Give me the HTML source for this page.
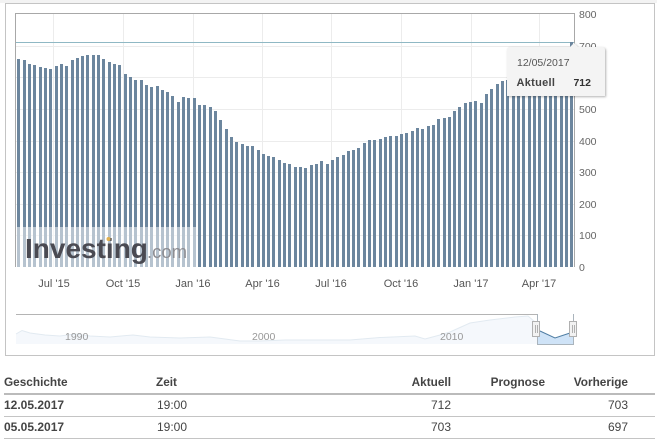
<!DOCTYPE html>
<html><head><meta charset="utf-8"><style>
html,body{margin:0;padding:0;background:#fff;width:657px;height:441px;overflow:hidden}
svg{display:block;font-family:"Liberation Sans",Arial,sans-serif}
</style></head><body>
<svg width="657" height="441" viewBox="0 0 657 441" xmlns="http://www.w3.org/2000/svg">
<rect width="657" height="3" fill="#f3f3f3"/>
<path d="M5.5 3.5H654.5V355.5H5.5Z" fill="#fff" stroke="#c4c4c4"/>
<g stroke="#ececec" fill="none" shape-rendering="crispEdges">
<path d="M53.5 14V267M123.5 14V267M193.5 14V267M262.5 14V267M331.5 14V267M401.5 14V267M471.5 14V267M539.5 14V267"/>
<path d="M16 46.5H574M16 77.5H574M16 109.5H574M16 141.5H574M16 172.5H574M16 204.5H574M16 235.5H574"/>
</g>
<path d="M15.5 267V13.5H574.5V267" fill="none" stroke="#a8a8a8" shape-rendering="crispEdges"/>
<path d="M16 42.5H574" stroke="#8fb8c4" shape-rendering="crispEdges"/>
<path shape-rendering="crispEdges" fill="none" stroke="#6c869e" stroke-width="3" d="M18.5 59V267M24.5 60V267M29.5 64V267M34.5 65V267M40.5 67V267M45.5 68V267M50.5 69V267M56.5 66V267M61.5 64V267M66.5 66V267M72.5 60V267M77.5 58V267M82.5 56V267M87.5 55V267M93.5 55V267M98.5 55V267M103.5 59V267M109.5 62V267M114.5 64V267M119.5 65V267M125.5 74V267M130.5 77V267M135.5 80V267M141.5 80V267M146.5 85V267M151.5 87V267M157.5 86V267M162.5 90V267M167.5 92V267M172.5 96V267M178.5 102V267M183.5 97V267M188.5 98V267M194.5 98V267M199.5 105V267M204.5 105V267M210.5 107V267M215.5 111V267M220.5 120V267M226.5 129V267M231.5 137V267M236.5 142V267M242.5 144V267M247.5 146V267M252.5 146V267M258.5 150V267M263.5 154V267M268.5 156V267M273.5 157V267M279.5 160V267M284.5 163V267M289.5 164V267M295.5 167V267M300.5 167V267M305.5 168V267M311.5 165V267M316.5 164V267M321.5 161V267M327.5 164V267M332.5 160V267M337.5 157V267M343.5 155V267M348.5 151V267M353.5 150V267M358.5 148V267M364.5 143V267M369.5 140V267M374.5 140V267M380.5 139V267M385.5 137V267M390.5 136V267M396.5 136V267M401.5 134V267M406.5 133V267M412.5 131V267M417.5 128V267M422.5 129V267M428.5 126V267M433.5 125V267M438.5 119V267M444.5 118V267M449.5 117V267M454.5 111V267M459.5 107V267M465.5 103V267M470.5 102V267M475.5 101V267M481.5 103V267M486.5 94V267M491.5 89V267M497.5 84V267M502.5 81V267M507.5 80V267M513.5 78V267M518.5 76V267M523.5 72V267M529.5 70V267M534.5 68V267M539.5 66V267M545.5 65V267M550.5 63V267M555.5 60V267M561.5 55V267M566.5 47V267M571.5 42V267"/>
<rect x="16" y="227" width="181" height="40" fill="#fff" fill-opacity=".5"/>
<text x="25" y="258" font-size="28" font-weight="700" fill="#4a4a52">Investing</text>
<text x="147" y="258" font-size="18.5" fill="#8d8d92">.com</text>
<circle cx="108.500" cy="239" r="2" fill="#e0b050"/>
<g font-size="10.5" fill="#666">
<text x="579" y="18">800</text><text x="579" y="50">700</text><text x="579" y="113">500</text><text x="579" y="145">400</text><text x="579" y="176">300</text><text x="579" y="208">200</text><text x="579" y="239">100</text><text x="579" y="271">0</text>
</g>
<g font-size="11" fill="#555" text-anchor="middle">
<text x="54" y="287">Jul '15</text><text x="123" y="287">Oct '15</text><text x="193" y="287">Jan '16</text><text x="262.500" y="287">Apr '16</text><text x="331" y="287">Jul '16</text><text x="401" y="287">Oct '16</text><text x="471" y="287">Jan '17</text><text x="539" y="287">Apr '17</text>
</g>
<path d="M16 314.500H537" stroke="#b4b4b4" shape-rendering="crispEdges"/>
<path d="M16 334L22 330.500L30 333L45 335L60 336L75 334L90 336L110 337L133 335L150 337L180 338L210 337L225 339L240 341L260 341L285 340L350 340L380 337.500L415 336L425 339L440 335L450 332L470 323L490 320L515 317L528 316L535 322L537 326V344H16Z" fill="#f5f8fc"/>
<path d="M16 334L22 330.500L30 333L45 335L60 336L75 334L90 336L110 337L133 335L150 337L180 338L210 337L225 339L240 341L260 341L285 340L350 340L380 337.500L415 336L425 339L440 335L450 332L470 323L490 320L515 317L528 316L535 322L537 326" fill="none" stroke="#e2eaf1"/>
<g font-size="10.5" fill="#999">
<text x="65" y="340">1990</text><text x="252" y="340">2000</text><text x="440" y="340">2010</text>
</g>
<path d="M537 327L540 331L555 338L570 333L573 332V344H537Z" fill="#cfe3f7"/>
<path d="M540 331L555 338L570 333" fill="none" stroke="#4f7da3"/>
<path d="M537.500 314V344.500H573.500V314" fill="none" stroke="#aab4bc" shape-rendering="crispEdges"/>
<g shape-rendering="crispEdges">
<rect x="532.500" y="321.500" width="7" height="15" fill="#f2f2f2" stroke="#b0b0b0"/>
<path d="M535.500 325V333M537.500 325V333" stroke="#b0b0b0"/>
<rect x="569.500" y="321.500" width="7" height="15" fill="#f2f2f2" stroke="#b0b0b0"/>
<path d="M572.500 325V333M574.500 325V333" stroke="#b0b0b0"/>
</g>
<path d="M507 96V50Q507 47 510 47H570L574 43L578 47H602Q605 47 605 50V96Z" fill="#f4f4f4" style="filter:drop-shadow(1px 1px 1px rgba(0,0,0,.3))"/>
<text x="517" y="66" font-size="10.5" fill="#555">12/05/2017</text>
<text x="516.500" y="86" font-size="11" font-weight="700" fill="#444" letter-spacing=".3">Aktuell</text>
<text x="591" y="86" font-size="10.5" font-weight="700" fill="#333" text-anchor="end">712</text>
<g font-size="11.8" font-weight="700" fill="#444">
<text x="4" y="386">Geschichte</text><text x="156" y="386">Zeit</text>
<text x="451" y="386" text-anchor="end">Aktuell</text><text x="545" y="386" text-anchor="end">Prognose</text><text x="628" y="386" text-anchor="end">Vorherige</text>
</g>
<rect x="4" y="393" width="651" height="2" fill="#bbb"/>
<path d="M4 416.500H655M4 438.500H655" stroke="#c4c4c4" shape-rendering="crispEdges"/>
<g font-size="12" fill="#444">
<text x="4" y="409" font-weight="700">12.05.2017</text><text x="157" y="409">19:00</text><text x="451" y="409" text-anchor="end">712</text><text x="628" y="409" text-anchor="end">703</text>
<text x="4" y="431" font-weight="700">05.05.2017</text><text x="157" y="431">19:00</text><text x="451" y="431" text-anchor="end">703</text><text x="628" y="431" text-anchor="end">697</text>
</g>
</svg>
</body></html>
